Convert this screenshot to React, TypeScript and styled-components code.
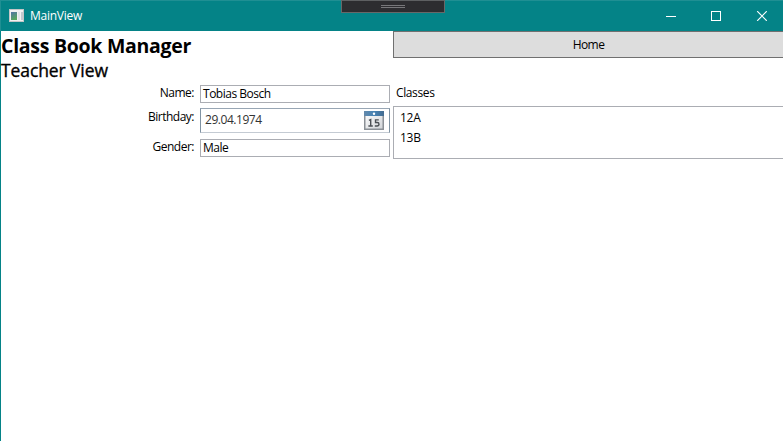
import React from "react";
import styled, { createGlobalStyle } from "styled-components";

const GlobalStyle = createGlobalStyle`
  * { box-sizing: border-box; }
  html, body { margin: 0; padding: 0; overflow: hidden; background: #fff; }
  body { font-family: "Segoe UI", "Open Sans", "Noto Sans", sans-serif; font-size: 12px; color: #000; }
`;

const Window = styled.div`
  width: 783px;
  height: 441px;
  display: flex;
  flex-direction: column;
  overflow: hidden;
  background: #fff;
`;

const TitleBar = styled.header`
  position: relative;
  flex: none;
  height: 31px;
  display: flex;
  align-items: center;
  padding-left: 8px;
  background: #048387;
  border-top: 1px solid #1f8f93;
  border-left: 1px solid #1f8f93;
  color: #fff;
`;

const WindowTitle = styled.span`
  flex: 1;
  margin-left: 5px;
  line-height: 16px;
  letter-spacing: -0.25px;
`;

const CaptionButton = styled.button`
  width: 45px;
  height: 30px;
  flex: none;
  border: 0;
  padding: 0;
  background: transparent;
  display: flex;
  align-items: center;
  justify-content: center;
`;

const DebugToolbar = styled.div`
  position: absolute;
  left: 340px;
  top: -1px;
  width: 104px;
  height: 13px;
  background: #2d2d30;
  border: 1px solid #686868;
  border-top-color: #5e6062;
  display: flex;
  justify-content: center;
  padding-top: 4px;
`;

const Grip = styled.div`
  width: 24px;
  height: 3px;
  border-top: 1px solid #77777a;
  border-bottom: 1px solid #77777a;
`;

const Content = styled.main`
  flex: 1;
  display: grid;
  grid-template-columns: 392px 390px;
  border-left: 1px solid #048387;
`;

const Column = styled.section`
  display: flex;
  flex-direction: column;
  min-width: 0;
`;

const AppHeading = styled.h1`
  margin: 0;
  height: 29px;
  font-size: 19.5px;
  line-height: 30px;
  font-weight: 700;
  letter-spacing: -0.28px;
  white-space: nowrap;
`;

const ViewHeading = styled.h2`
  margin: 0;
  height: 25px;
  font-size: 17.5px;
  line-height: 20px;
  font-weight: 500;
  letter-spacing: -0.1px;
  -webkit-text-stroke: 0.35px #000;
  white-space: nowrap;
`;

const Form = styled.form`
  display: grid;
  grid-template-columns: 193px 190px;
  grid-template-rows: 18px 25px 17px;
  column-gap: 6px;
  row-gap: 5px;
`;

const Label = styled.label`
  justify-self: end;
  line-height: 16px;
  letter-spacing: -0.5px;
  white-space: nowrap;
`;

const BirthdayLabel = styled(Label)`
  line-height: 18px;
`;

const TextField = styled.div`
  border: 1px solid #abadb3;
  padding-left: 2px;
  line-height: 16px;
  letter-spacing: -0.48px;
  white-space: nowrap;
`;

const DateField = styled.div`
  display: flex;
  justify-content: space-between;
  padding: 2px 5px 0 4px;
  border: 1px solid #c4cbd3;
  border-top-color: #98a6b4;
  border-left-color: #8093a3;
  border-right-color: #8093a3;
  color: #333;
  line-height: 18px;
  letter-spacing: -0.45px;
`;

const GenderRow = styled.div`
  grid-column: 1 / -1;
  display: grid;
  grid-template-columns: subgrid;
  height: 17px;
  margin-top: 1px;
`;

const GenderField = styled(TextField)`
  line-height: 16px;
`;

const HomeButton = styled.button`
  height: 27px;
  flex: none;
  border: 1px solid #707070;
  border-right: 0;
  background: #ddd;
  padding: 0;
  font: inherit;
  color: #000;
  line-height: 25px;
  letter-spacing: -0.55px;
`;

const ListCaption = styled.div`
  padding-left: 3px;
  margin-top: 27px;
  height: 21px;
  line-height: 16px;
  letter-spacing: -0.38px;
`;

const ListBox = styled.ul`
  list-style: none;
  margin: 0;
  height: 53px;
  padding: 1px 0 0 6px;
  border: 1px solid #abadb3;
  border-right: 0;
`;

const ListItem = styled.li`
  height: 20px;
  line-height: 20px;
  letter-spacing: -0.25px;
`;

const AppIcon = () => (
  <svg width="16" height="14" viewBox="0 0 16 14" shapeRendering="crispEdges">
    <defs>
      <linearGradient id="pane" x1="0" y1="0" x2="0.4" y2="1">
        <stop offset="0" stopColor="#5274a5" />
        <stop offset="1" stopColor="#57a65d" />
      </linearGradient>
    </defs>
    <rect x="0.5" y="0.5" width="14" height="12" fill="#f1f1f1" stroke="#c3c6c7" />
    <rect x="2" y="3" width="6" height="8" fill="url(#pane)" />
    <rect x="9" y="3" width="2" height="8" fill="#e1e4e7" />
    <rect x="12" y="3" width="2" height="8" fill="#c3c9cf" />
  </svg>
);

const MinimizeIcon = () => (
  <svg width="10" height="10" shapeRendering="crispEdges">
    <path d="M0 5.5H10" stroke="#fff" />
  </svg>
);

const MaximizeIcon = () => (
  <svg width="10" height="10" shapeRendering="crispEdges">
    <rect x="0.5" y="0.5" width="9" height="9" fill="none" stroke="#fff" />
  </svg>
);

const CloseIcon = () => (
  <svg width="12" height="10" viewBox="-2 0 12 10">
    <path d="M0.2 0.2L9.8 9.8M9.8 0.2L0.2 9.8" stroke="#fff" strokeWidth="1.2" />
  </svg>
);

const CalendarIcon = () => (
  <svg width="20" height="19" viewBox="0 0 20 19">
    <defs>
      <linearGradient id="page" x1="0" y1="0" x2="1" y2="1">
        <stop offset="0" stopColor="#fff" />
        <stop offset="1" stopColor="#d0d3d7" />
      </linearGradient>
      <linearGradient id="band" x1="0" y1="0" x2="1" y2="0">
        <stop offset="0" stopColor="#6489aa" />
        <stop offset="0.5" stopColor="#4683b5" />
        <stop offset="1" stopColor="#456c90" />
      </linearGradient>
    </defs>
    <rect x="0.75" y="0.75" width="18.5" height="17.5" fill="url(#page)" stroke="#8b9096" strokeWidth="1.5" />
    <rect x="0" y="0" width="20" height="5" fill="url(#band)" />
    <circle cx="10" cy="2.7" r="1.2" fill="#fff" />
    <path d="M4.9 9.3L6.7 8.5V15.4M4.4 15H8.8" fill="none" stroke="#4b4f54" strokeWidth="1.4" />
    <path d="M14.8 8.9H11.5V11.5H13.3Q15 11.5 15 13.2Q15 15 13 15H10.8" fill="none" stroke="#4b4f54" strokeWidth="1.35" />
  </svg>
);

export default function App() {
  return (
    <>
      <GlobalStyle />
      <Window>
        <TitleBar>
          <AppIcon />
          <WindowTitle>MainView</WindowTitle>
          <DebugToolbar>
            <Grip />
          </DebugToolbar>
          <CaptionButton aria-label="Minimize"><MinimizeIcon /></CaptionButton>
          <CaptionButton aria-label="Maximize"><MaximizeIcon /></CaptionButton>
          <CaptionButton aria-label="Close"><CloseIcon /></CaptionButton>
        </TitleBar>
        <Content>
          <Column>
            <AppHeading>Class Book Manager</AppHeading>
            <ViewHeading>Teacher View</ViewHeading>
            <Form>
              <Label>Name:</Label>
              <TextField>Tobias Bosch</TextField>
              <BirthdayLabel>Birthday:</BirthdayLabel>
              <DateField>
                <span>29.04.1974</span>
                <CalendarIcon />
              </DateField>
              <GenderRow>
                <Label>Gender:</Label>
                <GenderField>Male</GenderField>
              </GenderRow>
            </Form>
          </Column>
          <Column>
            <HomeButton>Home</HomeButton>
            <ListCaption>Classes</ListCaption>
            <ListBox>
              <ListItem>12A</ListItem>
              <ListItem>13B</ListItem>
            </ListBox>
          </Column>
        </Content>
      </Window>
    </>
  );
}
